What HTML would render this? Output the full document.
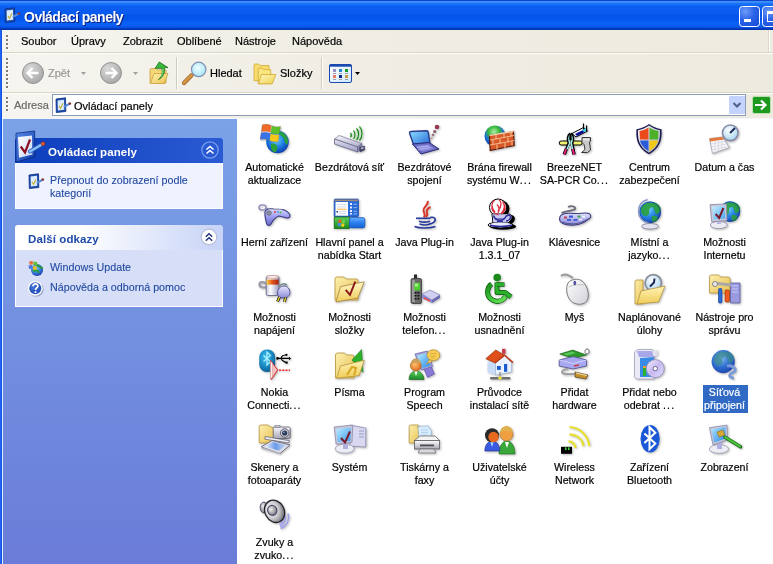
<!DOCTYPE html><html><head><meta charset="utf-8"><style>
*{margin:0;padding:0;box-sizing:border-box}
html,body{width:773px;height:564px;overflow:hidden;background:#fff;font-family:"Liberation Sans",sans-serif;font-size:11px}
.a{position:absolute;white-space:nowrap}
.g{position:absolute;width:2px;height:2px;background:#7e7c74;box-shadow:1px 1px 0 #fff}
.lb{position:absolute;width:75px;text-align:center;color:#000;line-height:13px;white-space:nowrap;transform:translateZ(0) scaleX(0.97);-webkit-text-stroke:0.2px #000}
.el{letter-spacing:1.2px}
.m{transform:translateZ(0);-webkit-text-stroke:0.2px #000}
svg{position:absolute;overflow:visible}
.lk{color:#2148a0;transform:translateZ(0) scaleX(0.975);transform-origin:0 0;-webkit-text-stroke:0.1px #2148a0}
</style></head><body>
<div class="a" style="left:0;top:0;width:773px;height:30px;background:linear-gradient(#0d45cc 0px,#0d45cc 1px,#3d8ef8 1px,#3a8af8 3px,#1a72fa 3px,#1570f8 5px,#0a5eef 6px,#0a5cf0 13px,#0555ea 15px,#0555ea 20px,#0a5ff4 22px,#0a5ff4 25px,#0556e6 27px,#0846d8 28px,#0036b0 29px,#0034a8 30px)"></div>
<svg style="left:4px;top:7px" width="16" height="16" viewBox="0 0 16 16"><path d="M1 2L10.5 .8 10.8 14.5 1.3 15.5z" fill="#2050b0" stroke="#0a2a80" stroke-width="0.8"/><path d="M2.6 3.6L9 2.8 9.2 12.8 2.9 13.6z" fill="#dcecff"/><path d="M4 9l1.5 2.2 2.5-5" stroke="#c8b040" stroke-width="1.2" fill="none"/><path d="M9.5 9.5L14.5 6.8" stroke="#5a8ad8" stroke-width="2" stroke-linecap="round"/><circle cx="14.8" cy="6.6" r="1.3" fill="#8a3a3a"/></svg>
<div class="a" style="left:24px;top:9px;color:#fff;font-weight:bold;font-size:14px;letter-spacing:-0.5px;text-shadow:1px 1px 0 #0a1f80;transform:translateZ(0)">Ovládací panely</div>
<svg style="left:739px;top:6px" width="21" height="21" viewBox="0 0 21 21"><defs><radialGradient id="mb" cx="0.3" cy="0.25" r="0.9"><stop offset="0" stop-color="#6d9cf8"/><stop offset="0.5" stop-color="#2a62e8"/><stop offset="1" stop-color="#1a4ed8"/></radialGradient></defs><rect x="0.5" y="0.5" width="20" height="20" rx="3" fill="url(#mb)" stroke="#fff"/><rect x="5" y="13" width="7" height="3" fill="#fff"/></svg>
<svg style="left:762px;top:6px" width="21" height="21" viewBox="0 0 21 21"><rect x="0.5" y="0.5" width="20" height="20" rx="3" fill="url(#mb)" stroke="#fff"/><rect x="5.5" y="6" width="10" height="9.5" fill="none" stroke="#fff" stroke-width="1"/><rect x="5" y="5" width="11" height="3" fill="#fff"/></svg>
<div class="a" style="left:2px;top:30px;width:771px;height:88px;background:linear-gradient(90deg,#f6f5f0 0,#f0eee5 35%,#edebdf 100%)"></div>
<div class="a" style="left:2px;top:52px;width:771px;height:1px;background:#d8d4c4"></div>
<div class="a" style="left:2px;top:53px;width:771px;height:1px;background:#fff"></div>
<div class="a" style="left:2px;top:92px;width:771px;height:1px;background:#d8d4c4"></div>
<div class="a" style="left:2px;top:93px;width:771px;height:1px;background:#fff"></div>
<div class="a" style="left:2px;top:118px;width:771px;height:1px;background:#f4f6fb"></div>
<div class="a" style="left:769px;top:30px;width:1px;height:22px;background:#fff"></div>
<div class="a" style="left:768px;top:30px;width:1px;height:22px;background:#dcd8c8"></div>
<div class="g" style="left:6px;top:35px"></div>
<div class="g" style="left:6px;top:39px"></div>
<div class="g" style="left:6px;top:43px"></div>
<div class="g" style="left:6px;top:47px"></div>
<div class="g" style="left:6px;top:58px"></div>
<div class="g" style="left:6px;top:62px"></div>
<div class="g" style="left:6px;top:66px"></div>
<div class="g" style="left:6px;top:70px"></div>
<div class="g" style="left:6px;top:74px"></div>
<div class="g" style="left:6px;top:78px"></div>
<div class="g" style="left:6px;top:82px"></div>
<div class="g" style="left:6px;top:86px"></div>
<div class="g" style="left:6px;top:97px"></div>
<div class="g" style="left:6px;top:101px"></div>
<div class="g" style="left:6px;top:105px"></div>
<div class="g" style="left:6px;top:109px"></div>
<div class="a m" style="left:21px;top:35px">Soubor</div>
<div class="a m" style="left:71px;top:35px">Úpravy</div>
<div class="a m" style="left:123px;top:35px">Zobrazit</div>
<div class="a m" style="left:177px;top:35px">Oblíbené</div>
<div class="a m" style="left:235px;top:35px">Nástroje</div>
<div class="a m" style="left:292px;top:35px">Nápověda</div>
<svg style="left:22px;top:62px" width="22" height="22" viewBox="0 0 22 22"><defs><radialGradient id="gb" cx="0.35" cy="0.3" r="0.8"><stop offset="0" stop-color="#dadada"/><stop offset="1" stop-color="#a4a4a4"/></radialGradient></defs><circle cx="11" cy="11" r="10.5" fill="url(#gb)" stroke="#929292"/><path d="M16.5 11H6M10.5 6l-5 5 5 5" stroke="#fff" stroke-width="2.4" fill="none" stroke-linejoin="miter"/></svg>
<div class="a m" style="left:48px;top:67px;color:#979797;-webkit-text-stroke:0.2px #979797">Zpět</div>
<svg style="left:81px;top:72px" width="5" height="3" viewBox="0 0 5 3"><path d="M0 0h5l-2.5 3z" fill="#a0a0a0"/></svg>
<svg style="left:100px;top:62px" width="22" height="22" viewBox="0 0 22 22"><circle cx="11" cy="11" r="10.5" fill="url(#gb)" stroke="#929292"/><path d="M5.5 11H16M11.5 6l5 5-5 5" stroke="#fff" stroke-width="2.4" fill="none"/></svg>
<svg style="left:133px;top:72px" width="5" height="3" viewBox="0 0 5 3"><path d="M0 0h5l-2.5 3z" fill="#a0a0a0"/></svg>
<svg style="left:148px;top:60px" width="24" height="24" viewBox="0 0 24 24"><defs><linearGradient id="upf" x1="0" y1="0" x2="1" y2="1"><stop offset="0" stop-color="#fff4b0"/><stop offset="1" stop-color="#e8c050"/></linearGradient></defs><path d="M2 10q0-1.5 1.5-1.5h5l1.5 1.5h8v13H2z" fill="#f4d878" stroke="#c8a040" stroke-width="0.8"/><path d="M2.5 23.5l3.5-10h14l-3.5 10z" fill="url(#upf)" stroke="#c8a040" stroke-width="0.8"/><path d="M10.5 19.5c3-2.5 4.5-6 3.5-11.2H7.2L11.3 2l8.6 5.6h-3.4c.5 6-2 10-6 11.9z" fill="#3cb83c" stroke="#1a6a1a" stroke-width="0.8"/><path d="M12.5 17c1.8-2 2.6-4.5 2.3-8" stroke="#8ae88a" stroke-width="1" fill="none"/></svg>
<div class="a" style="left:176px;top:57px;width:1px;height:32px;background:#d0ccba"></div>
<div class="a" style="left:177px;top:57px;width:1px;height:32px;background:#fff"></div>
<svg style="left:181px;top:60px" width="26" height="26" viewBox="0 0 26 26"><defs><radialGradient id="lens" cx="0.45" cy="0.4" r="0.6"><stop offset="0" stop-color="#f0ffff"/><stop offset="1" stop-color="#a8e4f8"/></radialGradient><linearGradient id="hdl" x1="0" y1="0" x2="1" y2="1"><stop offset="0" stop-color="#f8c060"/><stop offset="1" stop-color="#b86a20"/></linearGradient></defs><path d="M3 23l7.6-7.8" stroke="#8a5a2a" stroke-width="4.2" stroke-linecap="round"/><path d="M3 23l7.6-7.8" stroke="url(#hdl)" stroke-width="3" stroke-linecap="round"/><circle cx="17.7" cy="9.4" r="7.2" fill="url(#lens)" stroke="#8090b0" stroke-width="1.2"/></svg>
<div class="a m" style="left:210px;top:67px">Hledat</div>
<svg style="left:252px;top:62px" width="24" height="22" viewBox="0 0 24 22"><defs><linearGradient id="fld" x1="0" y1="0" x2="1" y2="1"><stop offset="0" stop-color="#fff8c0"/><stop offset="1" stop-color="#f0d050"/></linearGradient></defs><path d="M2 3q0-1 1-1h3.5l1.5 1.5h9V18.7H2z" fill="#f8dc70" stroke="#d0a830" stroke-width="0.8"/><path d="M6.2 7.2q0-1 1-1h3l1.5 1.5h7v14H6.2z" fill="#fae680" stroke="#d0a830" stroke-width="0.8"/><path d="M6.5 21.8l3-9.3h14.3l-3.5 9.3z" fill="url(#fld)" stroke="#d0a830" stroke-width="0.8"/></svg>
<div class="a m" style="left:280px;top:67px">Složky</div>
<div class="a" style="left:321px;top:57px;width:1px;height:32px;background:#d0ccba"></div>
<div class="a" style="left:322px;top:57px;width:1px;height:32px;background:#fff"></div>
<svg style="left:327px;top:62px" width="25" height="22" viewBox="0 0 25 22"><defs><linearGradient id="vw" x1="0" y1="0" x2="1" y2="1"><stop offset="0" stop-color="#ffffff"/><stop offset="1" stop-color="#cfe6ff"/></linearGradient></defs><rect x="2.5" y="2.5" width="22" height="18" rx="1.5" fill="url(#vw)" stroke="#1a4ab0" stroke-width="1"/><rect x="2.5" y="2.5" width="22" height="2.2" fill="#1a4ab0"/><rect x="6" y="7" width="3" height="3" fill="#9a90c0"/><rect x="6" y="11" width="3" height="1" fill="#a0a0a8"/><rect x="12" y="7" width="3" height="3" fill="#2a8ac8"/><rect x="12" y="11" width="3" height="1" fill="#a0a0a8"/><rect x="18" y="7" width="3" height="3" fill="#1a9a2a"/><rect x="18" y="11" width="3" height="1" fill="#a0a0a8"/><rect x="6" y="13" width="3" height="3" fill="#e8806a"/><rect x="6" y="17" width="3" height="1" fill="#a0a0a8"/><rect x="12" y="13" width="3" height="3" fill="#0a2a90"/><rect x="12" y="17" width="3" height="1" fill="#a0a0a8"/><rect x="18" y="13" width="3" height="3" fill="#c8a040"/><rect x="18" y="17" width="3" height="1" fill="#a0a0a8"/></svg>
<svg style="left:355px;top:72px" width="5" height="3" viewBox="0 0 5 3"><path d="M0 0h5l-2.5 3z" fill="#000"/></svg>
<div class="a m" style="left:14px;top:99px;color:#6a6a6a;-webkit-text-stroke:0.2px #6a6a6a">Adresa</div>
<div class="a" style="left:52px;top:94px;width:694px;height:22px;background:#fff;border:1px solid #8a9cb6"></div>
<svg style="left:55px;top:97px" width="16" height="16" viewBox="0 0 16 16"><path d="M1 2L10.5 .8 10.8 14.5 1.3 15.5z" fill="#2050b0" stroke="#0a2a80" stroke-width="0.8"/><path d="M2.6 3.6L9 2.8 9.2 12.8 2.9 13.6z" fill="#dcecff"/><path d="M4 9l1.5 2.2 2.5-5" stroke="#c8b040" stroke-width="1.2" fill="none"/><path d="M9.5 9.5L14.5 6.8" stroke="#5a8ad8" stroke-width="2" stroke-linecap="round"/><circle cx="14.8" cy="6.6" r="1.3" fill="#8a3a3a"/></svg>
<div class="a m" style="left:74px;top:100px">Ovládací panely</div>
<svg style="left:729px;top:96px" width="16" height="18" viewBox="0 0 16 18"><rect x="0" y="0" width="16" height="18" rx="1" fill="#c3d3fd"/><path d="M4.5 7l3.5 3.5 3.5-3.5" stroke="#4d6185" stroke-width="2" fill="none"/></svg>
<svg style="left:752px;top:96px" width="19" height="18" viewBox="0 0 19 18"><rect x="0.5" y="0.5" width="18" height="17" rx="2" fill="#1d9a1d" stroke="#b8e0b0"/><path d="M3 9h10M9 4.5l4.5 4.5-4.5 4.5" stroke="#fff" stroke-width="2.2" fill="none"/></svg>
<div class="a" style="left:0;top:30px;width:1px;height:534px;background:#2264f4"></div>
<div class="a" style="left:1px;top:30px;width:1px;height:534px;background:#1452e6"></div>
<div class="a" style="left:2px;top:119px;width:1px;height:445px;background:#e0f2ff"></div>
<div class="a" style="left:3px;top:119px;width:234px;height:445px;background:linear-gradient(#7ba2e7,#6a7cd8)"></div>
<div class="a" style="left:15px;top:138px;width:208px;height:25px;border-radius:3px 3px 0 0;background:linear-gradient(90deg,#0c3dbb 0%,#1f4fc9 60%,#2a5bd3 100%)"></div>
<div class="a" style="left:15px;top:163px;width:208px;height:46px;background:#eff3ff;border:1px solid #fff;border-top:0"></div>
<svg style="left:14px;top:130px" width="32" height="32" viewBox="0 0 32 32"><defs><linearGradient id="cpf" x1="0" y1="0" x2="1" y2="1"><stop offset="0" stop-color="#5a8ae8"/><stop offset="1" stop-color="#0c3aa8"/></linearGradient><linearGradient id="cpi" x1="0" y1="0" x2="1" y2="1"><stop offset="0" stop-color="#ffffff"/><stop offset="1" stop-color="#c8d8f8"/></linearGradient></defs><path d="M2 3.3L20.6 1 21 26.7 2 32z" fill="url(#cpf)" stroke="#0a2a80" stroke-width="0.8"/><path d="M4 7L18 5.4 18.4 24.5 5 27.7z" fill="url(#cpi)"/><path d="M6.7 16.5l4.3 6 5-13" stroke="#8a1020" stroke-width="2.2" fill="none"/><path d="M16 21.5L28.5 14" stroke="#2a5ab8" stroke-width="4" stroke-linecap="round"/><path d="M16 21.5L28.5 14" stroke="#8ac0f8" stroke-width="2.4" stroke-linecap="round"/><circle cx="29" cy="13.7" r="2" fill="#e05a3a" stroke="#7a1a1a" stroke-width="0.6"/></svg>
<div class="a" style="left:48px;top:146px;color:#fff;font-weight:bold;font-size:11.5px;letter-spacing:0.1px;transform:translateZ(0)">Ovládací panely</div>
<svg style="left:201px;top:141px" width="18" height="18" viewBox="0 0 18 18"><circle cx="9" cy="9" r="8.2" fill="#2a5ad2" stroke="#7aa0ee" stroke-width="1.2"/><path d="M5.5 8.5l3.5-3 3.5 3M5.5 12.5l3.5-3 3.5 3" stroke="#fff" stroke-width="1.6" fill="none"/></svg>
<svg style="left:28px;top:173px" width="16" height="16" viewBox="0 0 16 16"><path d="M1 2L10.5 .8 10.8 14.5 1.3 15.5z" fill="#2050b0" stroke="#0a2a80" stroke-width="0.8"/><path d="M2.6 3.6L9 2.8 9.2 12.8 2.9 13.6z" fill="#dcecff"/><path d="M4 9l1.5 2.2 2.5-5" stroke="#c8b040" stroke-width="1.2" fill="none"/><path d="M9.5 9.5L14.5 6.8" stroke="#5a8ad8" stroke-width="2" stroke-linecap="round"/><circle cx="14.8" cy="6.6" r="1.3" fill="#8a3a3a"/></svg>
<div class="a lk" style="left:50px;top:174px;line-height:13px">Přepnout do zobrazení podle<br>kategorií</div>
<div class="a" style="left:15px;top:225px;width:208px;height:25px;border-radius:3px 3px 0 0;background:linear-gradient(90deg,#fff 0%,#fff 30%,#c6d3f7 100%)"></div>
<div class="a" style="left:15px;top:250px;width:208px;height:57px;background:#d6dff7;border:1px solid #fff;border-top:0"></div>
<div class="a" style="left:28px;top:233px;color:#1e4aa8;font-weight:bold;font-size:11.5px;letter-spacing:0.1px;transform:translateZ(0)">Další odkazy</div>
<svg style="left:200px;top:228px" width="18" height="18" viewBox="0 0 18 18"><circle cx="9" cy="9" r="7.8" fill="#fff" stroke="#b8bedc" stroke-width="1.2"/><path d="M5.8 8.8l3.2-3 3.2 3M5.8 12.8l3.2-3 3.2 3" stroke="#1c3078" stroke-width="1.4" fill="none"/></svg>
<svg style="left:27px;top:259px" width="17" height="17" viewBox="0 0 17 17"><defs><radialGradient id="wus" cx="0.4" cy="0.35" r="0.7"><stop offset="0" stop-color="#6ad0ff"/><stop offset="1" stop-color="#1238b0"/></radialGradient></defs><circle cx="10" cy="11" r="6" fill="url(#wus)"/><path d="M6 12c2-1 5-1 6 2M10 6c2 1 4 3 6 3" stroke="#2a9a3a" stroke-width="2" fill="none"/><path d="M2 2.5l3.5-.8 .8 3.6-3.5 .8z" fill="#f07040"/><path d="M6.5 2.5l3.8 .6-.4 3.6-3.6-.6z" fill="#60c030"/><path d="M1.5 6.5l3.6-.6 .6 3.6-3.6 .6z" fill="#4a7ae0"/><path d="M6.3 7l3.6 .5-.4 3.6-3.6-.5z" fill="#f0c020"/></svg>
<div class="a lk" style="left:50px;top:261px">Windows Update</div>
<svg style="left:27px;top:280px" width="17" height="17" viewBox="0 0 17 17"><circle cx="9.2" cy="9.2" r="7.4" fill="#1a2a60" opacity=".35"/><circle cx="8.3" cy="8.3" r="7.4" fill="#fff"/><circle cx="8.3" cy="8.3" r="6" fill="#2a58c0"/><circle cx="7" cy="6.5" r="3.5" fill="#5a88e0" opacity=".5"/><path d="M5.9 6.3c0-1.5 1.1-2.5 2.5-2.5s2.5 1 2.5 2.3c0 1.8-2.3 1.9-2.3 3.8" stroke="#fff" stroke-width="1.7" fill="none"/><rect x="7.6" y="11.2" width="1.8" height="1.8" fill="#fff"/></svg>
<div class="a lk" style="left:50px;top:281px">Nápověda a odborná pomoc</div>
<svg style="left:258px;top:122px;filter:drop-shadow(1px 1px 1px rgba(0,0,0,.28))" width="32" height="32" viewBox="0 0 32 32"><defs><radialGradient id="g00b" cx="0.45" cy="0.4" r="0.7"><stop offset="0" stop-color="#70d8ff"/><stop offset="0.5" stop-color="#1a78e0"/><stop offset="1" stop-color="#0a2a98"/></radialGradient></defs><circle cx="19.5" cy="20" r="11.3" fill="url(#g00b)"/><path d="M22 9.5c3 .5 6 3 7.5 6.5.8 2.5.5 5-.5 7-1.5-1-2.5-3-2.5-5s-2-3-4-4.5z M13 22c2-1 5 0 6 2s0 5-2 6.5c-2-.5-3.5-2-4-4.5z" fill="#2aa03a"/><path d="M4.3 2.8c3-1 6-.5 9 .7l-1 6.8c-3-1.2-6-1.5-9-.5z" fill="#f06a28"/><path d="M13.8 3.8c3 1.2 6 1.5 8.7.8l-1 7c-2.7.8-5.7.5-8.7-.8z" fill="#5cc028"/><path d="M3 10.8c3-1 6-.7 9 .5l-1 6.8c-3-1.2-6-1.5-9-.5z" fill="#3a72e8"/><path d="M12.6 11.6c3 1.2 6 1.5 8.7.8l-1 7c-2.7.8-5.7.5-8.7-.8z" fill="#f8c818"/><path d="M4.3 2.8c3-1 6-.5 9 .7 3 1.2 6 1.5 9.2.8l-2.2 15.2c-2.7.8-5.7.5-8.7-.8-3-1.2-6-1.5-9-.5z" fill="none" stroke="#5a4a3a" stroke-width="0.5" opacity=".5"/></svg>
<div class="lb" style="left:237.0px;top:161px">Automatické<br>aktualizace</div>
<svg style="left:333px;top:122px;filter:drop-shadow(1px 1px 1px rgba(0,0,0,.28))" width="32" height="32" viewBox="0 0 32 32"><defs><linearGradient id="u1" x1="0" y1="0" x2="0" y2="1"><stop offset="0" stop-color="#fafafe"/><stop offset="1" stop-color="#a8a8c8"/></linearGradient><linearGradient id="u1b" x1="0" y1="0" x2="0" y2="1"><stop offset="0" stop-color="#e4e4f4"/><stop offset="1" stop-color="#9a9ac4"/></linearGradient></defs><path d="M1.5 17l4.5-3.5 23 8-4.5 3.5z" fill="url(#u1)" stroke="#7a7a98" stroke-width="0.7"/><path d="M1.5 17l23 8v5l-23-8z" fill="url(#u1b)" stroke="#5a5a80" stroke-width="0.7"/><path d="M24.5 25l4.5-3.5v5l-4.5 3.5z" fill="#8a8ab0" stroke="#5a5a80" stroke-width="0.5"/><path d="M26.5 25.5l5-1.5v4l-4.5 2z" fill="#4a4a70" stroke="#2a2a50" stroke-width="0.5"/><path d="M28 25.8l2.5-.8v1.5l-2.5.8z" fill="#c8c8e0"/><g fill="none" stroke="#a8f0a8" stroke-width="2.4" opacity=".6"><path d="M17.5 11c1 1.2 1 3 0 4.2"/><path d="M20.5 8.5c2 2.2 2 6.3 0 8.5"/><path d="M23.5 6.5c2.8 3 2.8 8.5 0 11.5"/><path d="M26.5 4.5c3.3 4 3.3 10.5 0 14"/></g><g fill="none" stroke="#1a7a1a" stroke-width="1.1"><path d="M17.5 11c1 1.2 1 3 0 4.2"/><path d="M20.5 8.5c2 2.2 2 6.3 0 8.5"/><path d="M23.5 6.5c2.8 3 2.8 8.5 0 11.5"/><path d="M26.5 4.5c3.3 4 3.3 10.5 0 14"/></g></svg>
<div class="lb" style="left:312.0px;top:161px">Bezdrátová síť</div>
<svg style="left:408px;top:122px;filter:drop-shadow(1px 1px 1px rgba(0,0,0,.28))" width="32" height="32" viewBox="0 0 32 32"><defs><linearGradient id="l1" x1="0" y1="0" x2="1" y2="1"><stop offset="0" stop-color="#8ae0ff"/><stop offset="1" stop-color="#2a6ad8"/></linearGradient></defs><path d="M1.5 11q0-1.5 1.5-1.5l15.5-.8q1.5 0 1.7 1.5l1.8 10.8-16.5 1.5z" fill="url(#l1)" stroke="#2a3a8a" stroke-width="1.4"/><path d="M4.5 22l16.5-1.5 10 6.5-18 5z" fill="#6a6ac0" stroke="#2a2a7a" stroke-width="1"/><path d="M8 24l12-1.5 6 4-12 3z" fill="#8e8ee0"/><path d="M9 25.5l12-1.5M10 27.5l12-1.8" stroke="#c8c8f8" stroke-width="0.6"/><circle cx="29" cy="5" r="2.3" fill="#9a3a50"/><circle cx="26.7" cy="9.5" r="1.6" fill="#8a5a6a"/><circle cx="25" cy="13" r="1.4" fill="#9a7a80"/><circle cx="23.6" cy="16.2" r="1.1" fill="#b8a0a0"/></svg>
<div class="lb" style="left:387.0px;top:161px">Bezdrátové<br>spojení</div>
<svg style="left:483px;top:122px;filter:drop-shadow(1px 1px 1px rgba(0,0,0,.28))" width="32" height="32" viewBox="0 0 32 32"><defs><radialGradient id="g03b" cx="0.45" cy="0.3" r="0.75"><stop offset="0" stop-color="#a8f0a8"/><stop offset="0.35" stop-color="#3ab83a"/><stop offset="0.6" stop-color="#1a70d8"/><stop offset="1" stop-color="#0a2a98"/></radialGradient></defs><circle cx="12" cy="14" r="10.5" fill="url(#g03b)"/><path d="M6.5 13.5l24-4 .7 14-24 5z" fill="#d8582a" stroke="#5a1a0a" stroke-width="1.2"/><g stroke="#f4b888" stroke-width="1.1" fill="none"><path d="M7 18l24-4.5M7 23l24-4.5"/><path d="M13 12.5v5M21 11v5M28 10v4.5M10 18v5M17 17v5M25 15.5v5M14 22.5v5M22 21v5M29 19.5v4"/></g><path d="M6.5 13.5l24-4" stroke="#f8d0a8" stroke-width="1.4"/></svg>
<div class="lb" style="left:462.0px;top:161px">Brána firewall<br>systému W<span class=el>...</span></div>
<svg style="left:558px;top:122px;filter:drop-shadow(1px 1px 1px rgba(0,0,0,.28))" width="32" height="32" viewBox="0 0 32 32"><path d="M14 11.5l11.5-6 4 3.5-11.5 6z" fill="#fff" stroke="#000" stroke-width="1"/><path d="M17 12l8-4 2 2-8 4z" fill="#0a0a9a"/><path d="M24 8l4-2 1.5 2-3.5 2z" fill="#38d8f0"/><path d="M25.5 1.5v6M28.6 3.5v5.5" stroke="#000" stroke-width="1.2"/><rect x="1.2" y="19" width="23" height="4" rx="2" fill="#f0f070" stroke="#000" stroke-width="1"/><path d="M24 15.5h8.5v3.5l-1 1 1 8-3 2.5h-6l3.5-3-1-5-2-2z" fill="#c8c8c8" stroke="#383838" stroke-width="1"/><path d="M25 16.5h6v2h-6z" fill="#e8e8e8"/><path d="M12.5 12c-2.5 1-3 5-1.5 9l-4.5 11M12.5 12c2.5 1 3 5 1.5 9l2 11" fill="none" stroke="#000" stroke-width="3"/><path d="M12.5 13c-2 1-2 5-.8 8l-4.5 10.5M12.5 13c2 1 2 5 .8 8l2 10.5" fill="none" stroke="#a8f4f4" stroke-width="1.4"/><path d="M12.5 12v6" stroke="#000" stroke-width="2.2"/><path d="M8.2 27l-2 5.5M14.8 27l1.2 5.5" stroke="#000" stroke-width="3.4"/><path d="M8.2 27l-2 5.5M14.8 27l1.2 5.5" stroke="#e8207a" stroke-width="2"/></svg>
<div class="lb" style="left:537.0px;top:161px">BreezeNET<br>SA-PCR Co<span class=el>...</span></div>
<svg style="left:633px;top:122px;filter:drop-shadow(1px 1px 1px rgba(0,0,0,.28))" width="32" height="32" viewBox="0 0 32 32"><defs><linearGradient id="sh" x1="0" y1="0" x2="1" y2="1"><stop offset="0" stop-color="#fff"/><stop offset="1" stop-color="#9aa0b8"/></linearGradient></defs><path d="M16 2c-3 2.5-8 4.5-12.5 5.2-.5 8-.2 18 12.5 25 12.7-7 13-17 12.5-25C24 6.5 19 4.5 16 2z" fill="#1a1a50"/><path d="M16 3.6c-3 2.3-7 4-11 4.7-.3 7.3.2 16.3 11 22.5 10.8-6.2 11.3-15.2 11-22.5-4-.7-8-2.4-11-4.7z" fill="url(#sh)"/><path d="M15.5 5.5c-2.5 1.8-5.5 3-9 3.6L7 17.5h8.5z" fill="#ec4a1a"/><path d="M16.5 5.5c2.5 1.8 5.5 3 9 3.6L25 17.5h-8.5z" fill="#4cb02a"/><path d="M7 18.5h8.5v10.5C10 25.5 7.5 22 7 18.5z" fill="#2a5ad8"/><path d="M25 18.5h-8.5v10.5C22 25.5 24.5 22 25 18.5z" fill="#f0c818"/></svg>
<div class="lb" style="left:612.0px;top:161px">Centrum<br>zabezpečení</div>
<svg style="left:708px;top:122px;filter:drop-shadow(1px 1px 1px rgba(0,0,0,.28))" width="32" height="32" viewBox="0 0 32 32"><defs><radialGradient id="ck" cx="0.4" cy="0.35" r="0.7"><stop offset="0" stop-color="#ffffff"/><stop offset="1" stop-color="#a8d8f0"/></radialGradient></defs><path d="M1.5 16.5l13-1.5 7 10.5-17 6z" fill="#f4f4f8" stroke="#a0a0b0" stroke-width="0.8"/><path d="M1.5 16.5l13-1.5 1.5 2.5-14 2z" fill="#e8783a"/><g stroke="#d0d0dc" stroke-width="0.6"><path d="M3 22l14-2.5M3.5 25l15-3M4 28l15.5-3.5M7 19v11M10.5 18.5v10.5M14 18v9.5"/></g><circle cx="22.3" cy="10.8" r="8.6" fill="#8a8aa8"/><circle cx="22.3" cy="10.8" r="7" fill="url(#ck)"/><path d="M22 11l5-5" stroke="#1a2a5a" stroke-width="2"/></svg>
<div class="lb" style="left:687.0px;top:161px">Datum a čas</div>
<svg style="left:258px;top:197px;filter:drop-shadow(1px 1px 1px rgba(0,0,0,.28))" width="32" height="32" viewBox="0 0 32 32"><defs><linearGradient id="gp" x1="0" y1="0" x2="0" y2="1"><stop offset="0" stop-color="#d8d8ff"/><stop offset="0.5" stop-color="#9a9af0"/><stop offset="1" stop-color="#6a6ac8"/></linearGradient></defs><ellipse cx="4.5" cy="10.5" rx="3.5" ry="2.6" fill="none" stroke="#8a8ab8" stroke-width="1.4"/><path d="M7.5 11.5c2 .5 4 1 6 1.5" stroke="#8a8ab8" stroke-width="1.4"/><path d="M7 15C8 12 12 11.5 16 12L24 12.5C28 13 32 16 32 19C32 21 29 21.5 27 20.5L21 19C18 20 15 23 13 27C12 29 9 29 8.5 26.5C7.5 22 6.5 18 7 15z" fill="url(#gp)" stroke="#3a3a80" stroke-width="1.1"/><circle cx="11" cy="16" r="2.4" fill="#8a8a9a" stroke="#5a5a70" stroke-width="0.5"/><circle cx="17" cy="15" r="1" fill="#e04040"/><circle cx="20" cy="14.8" r="1" fill="#40a0e0"/><circle cx="22.5" cy="15.5" r="1" fill="#40c040"/><path d="M10 13c4-1 10-1 14 0" stroke="#fff" stroke-width="0.8" opacity=".7"/></svg>
<div class="lb" style="left:237.0px;top:236px">Herní zařízení</div>
<svg style="left:333px;top:197px;filter:drop-shadow(1px 1px 1px rgba(0,0,0,.28))" width="32" height="32" viewBox="0 0 32 32"><defs><linearGradient id="tb" x1="0" y1="0" x2="0" y2="1"><stop offset="0" stop-color="#6ab0ff"/><stop offset="0.5" stop-color="#2a80f0"/><stop offset="1" stop-color="#1a60d0"/></linearGradient><linearGradient id="sb" x1="0" y1="0" x2="0" y2="1"><stop offset="0" stop-color="#5ad05a"/><stop offset="1" stop-color="#1a8a1a"/></linearGradient></defs><rect x="1.2" y="2.1" width="24.2" height="17.6" rx="1" fill="#2a6ad8" stroke="#1a4aa8" stroke-width="0.8"/><rect x="1.6" y="2.5" width="23.4" height="1.6" fill="#f0a040" opacity=".6"/><rect x="2.5" y="5" width="12.5" height="13.7" fill="#fff"/><g fill="#c8d0e0"><rect x="4" y="7" width="9" height="0.8"/><rect x="4" y="9.5" width="9" height="0.8"/><rect x="6" y="14" width="7" height="0.8"/><rect x="6" y="16" width="7" height="0.8"/></g><rect x="4" y="11.7" width="9.5" height="1" fill="#f0b040"/><rect x="3.5" y="14" width="1.5" height="1.5" fill="#1a2a6a"/><g fill="#e8f0ff"><rect x="17" y="6" width="2" height="2"/><rect x="17" y="9.5" width="2" height="2"/><rect x="17" y="13" width="2" height="2"/><rect x="17" y="16" width="2" height="1.5"/></g><g fill="#a8c8f8"><rect x="20.5" y="6.8" width="3.5" height="0.8"/><rect x="20.5" y="10.3" width="3.5" height="0.8"/><rect x="20.5" y="13.8" width="3.5" height="0.8"/><rect x="20.5" y="16.5" width="3.5" height="0.8"/></g><rect x="1.2" y="20" width="15.3" height="11.5" fill="url(#sb)" stroke="#1a6a1a" stroke-width="0.8"/><rect x="16.5" y="20.6" width="15.3" height="10.3" rx="2" fill="url(#tb)" stroke="#1a5ac0" stroke-width="0.8"/><path d="M5.5 22.5l3 .3-.4 3-3-.3z" fill="#f05a2a"/><path d="M9 23l3 .3-.4 3-3-.3z" fill="#6ad04a"/><path d="M5 26l3 .3-.4 3-3-.3z" fill="#4a8af0"/><path d="M8.5 26.5l3 .3-.4 3-3-.3z" fill="#f8d020"/></svg>
<div class="lb" style="left:312.0px;top:236px">Hlavní panel a<br>nabídka Start</div>
<svg style="left:408px;top:197px;filter:drop-shadow(1px 1px 1px rgba(0,0,0,.28))" width="32" height="32" viewBox="0 0 32 32"><g fill="none" stroke="#d8382a" stroke-width="2"><path d="M19.5 4c2 3.5-4.5 5.5-4 9.5.3 3 2.5 3.5.5 7"/><path d="M22.5 10c-3 1.5-4.5 3.5-3.5 6s-.5 3-1.5 3.8"/></g><g fill="none" stroke="#2a3a9a" stroke-width="1.6"><path d="M8 21.3h14.5"/><path d="M22 20.5c4-1 6.5 1 4.5 4-1 1.5-3 2.2-5.5 2.5"/><path d="M11 24.2c3 1 8 1 11 0"/><path d="M11.5 27c3 1 8 1 10.5 0"/><path d="M6.5 29.5c5 2 15 2 21 0"/></g></svg>
<div class="lb" style="left:387.0px;top:236px">Java Plug-in</div>
<svg style="left:483px;top:197px;filter:drop-shadow(1px 1px 1px rgba(0,0,0,.28))" width="32" height="32" viewBox="0 0 32 32"><g transform="translate(2.5,1.5)" fill="#000"><ellipse cx="15" cy="10.5" rx="9" ry="9"/><path d="M8.5 16.5h16.5c4 0 5.5 3 3.5 6.5l-3 3.5H9.5z"/><ellipse cx="17.5" cy="28" rx="13" ry="3.2"/></g><g fill="#fff" stroke="#000" stroke-width="1"><ellipse cx="15" cy="10.5" rx="8.5" ry="8.5"/><path d="M9 17h16c4 0 5 3 3 6l-3 3H10z"/><ellipse cx="17.5" cy="28" rx="12.5" ry="2.8"/></g><path d="M9.5 17.5h15c3 0 4 2.5 2.5 5l-2.5 3H10.5z" fill="#c8c8f0"/><ellipse cx="17.5" cy="28" rx="11.5" ry="2.2" fill="#e8e8ff"/><g fill="none" stroke="#e0283a" stroke-width="1.3"><path d="M12 3c-4.5 3-3.5 8.5 0 12M16 2.5c3.5 3 2 7.5-1 11.5M19.5 4.5c3 3 2.5 8-1.5 12.5M9 9c-1 4 2 7.5 6.5 9M14 7.5c2 2 3 5 1 8.5M21.5 8.5c1.5 3 0 6.5-3.5 8.5"/></g><g fill="none" stroke="#2a2a9a" stroke-width="1.5"><path d="M10.5 18.5c2 6 10 7 13 0"/><path d="M23.5 19c3-2 6 0 3 3.5-1 1-2 1.5-3.5 1.5"/><path d="M7 28c5 2 16 2 22 0"/><path d="M13 22h8M14 24.5h6" stroke-width="1"/></g></svg>
<div class="lb" style="left:462.0px;top:236px">Java Plug-in<br>1.3.1_07</div>
<svg style="left:558px;top:197px;filter:drop-shadow(1px 1px 1px rgba(0,0,0,.28))" width="32" height="32" viewBox="0 0 32 32"><defs><linearGradient id="kb" x1="0" y1="0" x2="0" y2="1"><stop offset="0" stop-color="#e0e0ff"/><stop offset="1" stop-color="#8a8ad8"/></linearGradient></defs><path d="M10 10c4-2 8 0 7 2-1 2-9 1.5-13.5 4" fill="none" stroke="#6a6a7a" stroke-width="1.8"/><path d="M2 19.5c2-3.5 8-3.5 14-3s12-1.5 15 0c2 1 2.5 3.5.5 5-4 2.5-6 6-15 6.5-8 .5-17-1-14.5-8.5z" fill="url(#kb)" stroke="#3a3a7a" stroke-width="1.1"/><path d="M4 25c4 2 10 2 15 1.5 5-.5 8-3 11-4.5" fill="none" stroke="#5a5a9a" stroke-width="1.2"/><g fill="#c04050"><rect x="6" y="19.5" width="3" height="2"/></g><g fill="#3a5ad0"><rect x="11" y="18.5" width="4" height="2.2"/><rect x="9" y="22" width="4" height="1.8"/><rect x="15.5" y="22" width="4" height="1.8"/></g><g fill="#3aa050"><rect x="19.5" y="18.5" width="3" height="2"/></g><g fill="#fff" opacity=".8"><rect x="24" y="19" width="3" height="1.6"/><rect x="21" y="22" width="3" height="1.4"/></g></svg>
<div class="lb" style="left:537.0px;top:236px">Klávesnice</div>
<svg style="left:633px;top:197px;filter:drop-shadow(1px 1px 1px rgba(0,0,0,.28))" width="32" height="32" viewBox="0 0 32 32"><defs><radialGradient id="g15" cx="0.4" cy="0.35" r="0.75"><stop offset="0" stop-color="#7fd8ff"/><stop offset="0.45" stop-color="#2a8ae8"/><stop offset="1" stop-color="#1238a8"/></radialGradient></defs><circle cx="17.1" cy="15.2" r="10.8" fill="url(#g15)"/><path transform="translate(17.1,15.2) scale(0.9818181818181819)" d="M-8 -6c3-4 8-5 11-3 2 2-1 4-3 5-2 2 0 5-2 7-3 2-6 0-7-3-1-2 0-4 1-6z M3 -10c4 0 7 3 8 6 0 3-2 5-4 6-2 0-2-3-3-5-1-2-3-3-2-5z M2 4c3-1 6 0 6 2 0 3-3 5-5 4-1-1-2-4-1-6z" fill="#2aa03a" opacity="0.9"/><circle cx="17.1" cy="15.2" r="10.3" fill="none" stroke="#0d2f90" stroke-width="1" opacity="0.6"/><path d="M14.6 2.5c-6 1.5-9 6-9 12s4 10.5 10 11.5" fill="none" stroke="#8a9ac8" stroke-width="1.5"/><path d="M16 26v2" stroke="#a0a0c0" stroke-width="2"/><ellipse cx="17" cy="29.3" rx="8.5" ry="2.8" fill="#e4e4f0" stroke="#9090a8" stroke-width="1"/></svg>
<div class="lb" style="left:612.0px;top:236px">Místní a<br>jazyko<span class=el>...</span></div>
<svg style="left:708px;top:197px;filter:drop-shadow(1px 1px 1px rgba(0,0,0,.28))" width="32" height="32" viewBox="0 0 32 32"><defs><radialGradient id="g16" cx="0.4" cy="0.35" r="0.75"><stop offset="0" stop-color="#7fd8ff"/><stop offset="0.45" stop-color="#2a8ae8"/><stop offset="1" stop-color="#1238a8"/></radialGradient></defs><circle cx="21.9" cy="14.6" r="10.3" fill="url(#g16)"/><path transform="translate(21.9,14.6) scale(0.9363636363636364)" d="M-8 -6c3-4 8-5 11-3 2 2-1 4-3 5-2 2 0 5-2 7-3 2-6 0-7-3-1-2 0-4 1-6z M3 -10c4 0 7 3 8 6 0 3-2 5-4 6-2 0-2-3-3-5-1-2-3-3-2-5z M2 4c3-1 6 0 6 2 0 3-3 5-5 4-1-1-2-4-1-6z" fill="#2aa03a" opacity="0.9"/><circle cx="21.9" cy="14.6" r="9.8" fill="none" stroke="#0d2f90" stroke-width="1" opacity="0.6"/><ellipse cx="10.8" cy="28" rx="8.5" ry="3.6" fill="#ececf4" stroke="#9a9ab0" stroke-width="1"/><path d="M9 21h4v6H9z" fill="#b8b8e0"/><defs><linearGradient id="mi" x1="0" y1="0" x2="1" y2="1"><stop offset="0" stop-color="#c8f0ff"/><stop offset="1" stop-color="#4aa8ee"/></linearGradient></defs><path d="M2.1 7.6l16.3-.6.6 16.5-15.3 1.3z" fill="#c8c8d8" stroke="#8a8aa8" stroke-width="0.8"/><path d="M4 9.5l12.8-.5.5 12.5-11.8 1z" fill="url(#mi)"/><path d="M7.6 17l3.6 4 4.2-10" stroke="#7a1a2a" stroke-width="2" fill="none"/></svg>
<div class="lb" style="left:687.0px;top:236px">Možnosti<br>Internetu</div>
<svg style="left:258px;top:272px;filter:drop-shadow(1px 1px 1px rgba(0,0,0,.28))" width="32" height="32" viewBox="0 0 32 32"><defs><linearGradient id="bt" x1="0" y1="0" x2="1" y2="0"><stop offset="0" stop-color="#c8c8e0"/><stop offset="0.35" stop-color="#ffffff"/><stop offset="1" stop-color="#9a9ac0"/></linearGradient><linearGradient id="bnd" x1="0" y1="0" x2="1" y2="0"><stop offset="0" stop-color="#f8d040"/><stop offset="0.45" stop-color="#e85a20"/><stop offset="1" stop-color="#a82010"/></linearGradient><linearGradient id="plg" x1="0" y1="0" x2="0" y2="1"><stop offset="0" stop-color="#e8e8ff"/><stop offset="1" stop-color="#8a8ad8"/></linearGradient></defs><path d="M8.5 12c-3-2.5-7-2.5-7 .5s4 3.5 7 2.5" fill="none" stroke="#9a9aa8" stroke-width="2.2"/><rect x="8.2" y="4.2" width="12.8" height="19.3" rx="1.5" fill="url(#bt)" stroke="#6a6a88" stroke-width="0.9"/><ellipse cx="14.6" cy="5" rx="6.2" ry="1.5" fill="#f4e8e8" stroke="#c89080" stroke-width="0.6"/><rect x="8.6" y="7.6" width="12" height="5" fill="url(#bnd)"/><path d="M21 15c1-3 6-4.5 8-1.5" fill="none" stroke="#7a9090" stroke-width="1.6"/><path d="M19.5 21c0-4 3-7 6.5-7s6 3 6 6.5-3 5.5-6 5.5h-2.5c-2.5 0-4-2-4-5z" fill="url(#plg)" stroke="#4a4a90" stroke-width="0.9"/><path d="M21.5 25l-2 4.5M27.5 25.5l-1 4.5" stroke="#000" stroke-width="2.8"/><path d="M21.5 25l-2 4.5M27.5 25.5l-1 4.5" stroke="#f0d838" stroke-width="1.4"/></svg>
<div class="lb" style="left:237.0px;top:311px">Možnosti<br>napájení</div>
<svg style="left:333px;top:272px;filter:drop-shadow(1px 1px 1px rgba(0,0,0,.28))" width="32" height="32" viewBox="0 0 32 32"><defs><linearGradient id="f21" x1="0" y1="0" x2="1" y2="1"><stop offset="0" stop-color="#fcf0b0"/><stop offset="1" stop-color="#e8c050"/></linearGradient></defs><path d="M2 7q0-2 2-2h7l2 2h10q2 0 2 2V28H2z" fill="url(#f21)" stroke="#b8943a" stroke-width="0.8"/><defs><linearGradient id="f21b" x1="0" y1="0" x2="0" y2="1"><stop offset="0" stop-color="#fff8c8"/><stop offset="1" stop-color="#f0cc58"/></linearGradient></defs><path d="M7.6 14.6l23.6-4.8-6.4 16.2-22 4z" fill="url(#f21b)" stroke="#a8843a" stroke-width="0.8"/><path d="M12.7 17.8l4.3 5.1 5.3-13.4" stroke="#8a1a1a" stroke-width="2" fill="none"/></svg>
<div class="lb" style="left:312.0px;top:311px">Možnosti<br>složky</div>
<svg style="left:408px;top:272px;filter:drop-shadow(1px 1px 1px rgba(0,0,0,.28))" width="32" height="32" viewBox="0 0 32 32"><path d="M6 2.5h3v5H6z" fill="#2a2a2a"/><rect x="3" y="6.5" width="10.5" height="25" rx="1.5" fill="#6a6a6a" stroke="#3a3a3a" stroke-width="0.8"/><rect x="4" y="8" width="3" height="22" fill="#9a9a9a"/><rect x="6.3" y="10.8" width="5.7" height="7.6" fill="#4ad030"/><rect x="7" y="11.5" width="3" height="3" fill="#a8f088"/><g fill="#101010"><rect x="6.5" y="20" width="2" height="1.5"/><rect x="9.5" y="20" width="2" height="1.5"/><rect x="6.5" y="23" width="2" height="1.5"/><rect x="9.5" y="23" width="2" height="1.5"/><rect x="6.5" y="26" width="2" height="1.5"/><rect x="9.5" y="26" width="2" height="1.5"/></g><path d="M14 22l8-4 10 5-8 5z" fill="#d0d0f0" stroke="#7a7ab0" stroke-width="0.6"/><path d="M14 22l10 6v3l-10-5z" fill="#8a8ad8"/><path d="M24 28l8-5v3l-8 5z" fill="#6a6ab0"/><path d="M16 26l6 3" stroke="#e84a4a" stroke-width="1.5"/></svg>
<div class="lb" style="left:387.0px;top:311px">Možnosti<br>telefon<span class=el>...</span></div>
<svg style="left:483px;top:272px;filter:drop-shadow(1px 1px 1px rgba(0,0,0,.28))" width="32" height="32" viewBox="0 0 32 32"><defs><linearGradient id="wc" x1="0" y1="0" x2="1" y2="1"><stop offset="0" stop-color="#1a8a1a"/><stop offset="0.5" stop-color="#3ac83a"/><stop offset="1" stop-color="#6ae05a"/></linearGradient></defs><circle cx="14.2" cy="5.6" r="3.8" fill="#1a8a1a"/><path d="M8.5 12A9.6 9.6 0 1 0 22.5 24.5" fill="none" stroke="#0a5a0a" stroke-width="5"/><path d="M8.5 12A9.6 9.6 0 1 0 22.5 24.5" fill="none" stroke="url(#wc)" stroke-width="3.6"/><path d="M14 10.5v10h8l6 4.5" fill="none" stroke="#0a5a0a" stroke-width="5" stroke-linejoin="round"/><path d="M14 10.5v10h8l6 4.5" fill="none" stroke="#2ab02a" stroke-width="3.6" stroke-linejoin="round"/><path d="M14 12.5h7.5" stroke="#0a5a0a" stroke-width="4.4"/><path d="M14 12.5h7" stroke="#2ab02a" stroke-width="3"/></svg>
<div class="lb" style="left:462.0px;top:311px">Možnosti<br>usnadnění</div>
<svg style="left:558px;top:272px;filter:drop-shadow(1px 1px 1px rgba(0,0,0,.28))" width="32" height="32" viewBox="0 0 32 32"><defs><linearGradient id="ms" x1="0" y1="0" x2="1" y2="1"><stop offset="0" stop-color="#ffffff"/><stop offset="1" stop-color="#d0d0d8"/></linearGradient></defs><path d="M3 4c3-3 8-1 12 2" fill="none" stroke="#9a9a9a" stroke-width="2"/><path d="M10 11c3-4 10-5 14-2 5 4 7 12 6 17-1 5-6 7-11 6-6-1-9-6-10-11-.5-4-.5-7 1-10z" fill="url(#ms)" stroke="#7a7a80" stroke-width="1"/><path d="M10.5 15c4-2 12-3 16-2" fill="none" stroke="#b8b8c0" stroke-width="0.8"/><ellipse cx="16.8" cy="11" rx="1.4" ry="2.2" fill="#5050a0"/></svg>
<div class="lb" style="left:537.0px;top:311px">Myš</div>
<svg style="left:633px;top:272px;filter:drop-shadow(1px 1px 1px rgba(0,0,0,.28))" width="32" height="32" viewBox="0 0 32 32"><defs><linearGradient id="f25" x1="0" y1="0" x2="1" y2="1"><stop offset="0" stop-color="#fcf0b0"/><stop offset="1" stop-color="#e8c050"/></linearGradient><linearGradient id="f25b" x1="0" y1="0" x2="0" y2="1"><stop offset="0" stop-color="#fff4b8"/><stop offset="1" stop-color="#f0cc58"/></linearGradient><radialGradient id="ck2" cx="0.4" cy="0.35" r="0.7"><stop offset="0" stop-color="#fff"/><stop offset="1" stop-color="#b0d8f0"/></radialGradient></defs><path d="M2 10q0-2 2-2h6v24H2z" fill="url(#f25)" stroke="#b8943a" stroke-width="0.8"/><circle cx="20.3" cy="10.8" r="9" fill="#8a8a98"/><circle cx="20.3" cy="10.8" r="7.3" fill="url(#ck2)"/><path d="M17 14.5l4-4 .5-4" stroke="#1a2a5a" stroke-width="2" fill="none"/><path d="M8 19l24-5-6.5 16L4 32z" fill="url(#f25b)" stroke="#b8943a" stroke-width="0.8"/></svg>
<div class="lb" style="left:612.0px;top:311px">Naplánované<br>úlohy</div>
<svg style="left:708px;top:272px;filter:drop-shadow(1px 1px 1px rgba(0,0,0,.28))" width="32" height="32" viewBox="0 0 32 32"><defs><linearGradient id="f26" x1="0" y1="0" x2="1" y2="1"><stop offset="0" stop-color="#fcf0b0"/><stop offset="1" stop-color="#e8c050"/></linearGradient></defs><path d="M1.5 5q0-2 2-2h7l2 2h7.5q2 0 2 2V21H1.5z" fill="url(#f26)" stroke="#b8943a" stroke-width="0.8"/><path d="M22.5 11h9.5v20h-9.5z" fill="#9a9ae0" stroke="#5a5aa0" stroke-width="0.8"/><path d="M24 14h6M24 17h6M24 20h6" stroke="#c8c8f8" stroke-width="1"/><path d="M5 11l18 2" stroke="#a8a8a8" stroke-width="3"/><circle cx="7" cy="12" r="2.5" fill="#e8e8e8" stroke="#8a8a8a"/><rect x="10.5" y="16.5" width="3.5" height="14.5" rx="1" fill="#2a6ad8" stroke="#1a3a8a" stroke-width="0.6"/><rect x="17" y="18" width="4.5" height="12" rx="1" fill="#f05a1a" stroke="#8a2a0a" stroke-width="0.6"/></svg>
<div class="lb" style="left:687.0px;top:311px">Nástroje pro<br>správu</div>
<svg style="left:258px;top:347px;filter:drop-shadow(1px 1px 1px rgba(0,0,0,.28))" width="32" height="32" viewBox="0 0 32 32"><defs><radialGradient id="nbt" cx="0.4" cy="0.35" r="0.7"><stop offset="0" stop-color="#3ac0f0"/><stop offset="0.6" stop-color="#1a88c0"/><stop offset="1" stop-color="#0a5a90"/></radialGradient></defs><rect x="1.2" y="2.5" width="16" height="22.5" rx="7.5" fill="url(#nbt)"/><path d="M5.5 8.5l7 6-3.5 3.5V5l3.5 3.5-7 6" fill="none" stroke="#a8f0ff" stroke-width="1.3"/><path d="M12.4 13.3l7.3 9.6-6.4 9.6z" fill="#f8c0c0" stroke="#d02020" stroke-width="1"/><path d="M12.4 13.8l1.8 2.5v14l-1.8 1.8z" fill="#fff" stroke="#c08080" stroke-width="0.5"/><path d="M21 23.2h11" stroke="#e83030" stroke-width="1.5" stroke-dasharray="2.2 1"/><g stroke="#000" stroke-width="1.1" fill="none"><path d="M19 11.4h13M23 11.4c1-3 2-3 5-3.5M23 11.4c1 3 2 3 5 4"/></g><circle cx="19.5" cy="11.4" r="1.3"/><path d="M31 9.5l2 1.9-2 1.9z"/><circle cx="28.5" cy="7.8" r="1.1"/><rect x="27.5" y="14.5" width="2.2" height="2.2"/></svg>
<div class="lb" style="left:237.0px;top:386px">Nokia<br>Connecti<span class=el>...</span></div>
<svg style="left:333px;top:347px;filter:drop-shadow(1px 1px 1px rgba(0,0,0,.28))" width="32" height="32" viewBox="0 0 32 32"><defs><linearGradient id="f31" x1="0" y1="0" x2="1" y2="1"><stop offset="0" stop-color="#fcf0b0"/><stop offset="1" stop-color="#e8c050"/></linearGradient></defs><path d="M2.5 8q0-2 2-2h7l2 2h5.5q2 0 2 2V31H2.5z" fill="url(#f31)" stroke="#b8943a" stroke-width="0.8"/><path d="M19 13l9.6-10.5 1.4 22.9z" fill="#2ab02a" stroke="#1a7a1a" stroke-width="0.6"/><defs><linearGradient id="f31b" x1="0" y1="0" x2="0" y2="1"><stop offset="0" stop-color="#fff4b8"/><stop offset="1" stop-color="#f0cc58"/></linearGradient></defs><path d="M7.6 19l23.6-5.7-5 15.3-22.5 2.6z" fill="url(#f31b)" stroke="#b8943a" stroke-width="0.8"/><path d="M14 28l5-8 4 1-2 7" fill="none" stroke="#d8a820" stroke-width="2"/></svg>
<div class="lb" style="left:312.0px;top:386px">Písma</div>
<svg style="left:408px;top:347px;filter:drop-shadow(1px 1px 1px rgba(0,0,0,.28))" width="32" height="32" viewBox="0 0 32 32"><defs><linearGradient id="sp" x1="0" y1="0" x2="1" y2="1"><stop offset="0" stop-color="#b8f0ff"/><stop offset="1" stop-color="#2a88e8"/></linearGradient><radialGradient id="hd" cx="0.4" cy="0.4" r="0.6"><stop offset="0" stop-color="#ffc070"/><stop offset="1" stop-color="#e07020"/></radialGradient><linearGradient id="bd" x1="0" y1="0" x2="0" y2="1"><stop offset="0" stop-color="#5ad05a"/><stop offset="1" stop-color="#1a8a2a"/></linearGradient></defs><path d="M16 22l7-3 3.5 8-7 3.5z" fill="#8a7ad8" stroke="#5a4aa0" stroke-width="0.6"/><path d="M7 7L19.5 4l5 15.5-11 3.5z" fill="#a8a8d8" stroke="#6a6ab0" stroke-width="0.8"/><path d="M9 8.5l9.5-2.3 4 12.3-8.5 2.7z" fill="url(#sp)"/><ellipse cx="25.4" cy="8.2" rx="6.4" ry="5.4" fill="#f8d058" stroke="#b88a2a" stroke-width="0.8"/><path d="M21.5 12.5l-3 4.5 6-3z" fill="#f8d058" stroke="#b88a2a" stroke-width="0.6"/><path d="M22 6.5h7M21.5 9h7M23 11h4" stroke="#d8a030" stroke-width="0.8"/><path d="M1 32.5c0-5 3-8.5 7-8.5s8 3.5 8 8.5z" fill="url(#bd)" stroke="#1a5a1a" stroke-width="0.6"/><path d="M6.5 24.2l1.5 5 1.5-5z" fill="#fff"/><circle cx="7.8" cy="18.5" r="5.4" fill="url(#hd)" stroke="#9a5a1a" stroke-width="0.6"/><path d="M2.6 17.5c.5-4.5 3-6 5.2-6s5 1.5 5.4 6c-1.5-1.5-3-2-5.4-2s-3.8.5-5.2 2z" fill="#c8a060"/></svg>
<div class="lb" style="left:387.0px;top:386px">Program<br>Speech</div>
<svg style="left:483px;top:347px;filter:drop-shadow(1px 1px 1px rgba(0,0,0,.28))" width="32" height="32" viewBox="0 0 32 32"><path d="M4.5 15.5l8-1.5v14l-8-3z" fill="#c8dcf8"/><path d="M12.5 14L20 7l8.5 8.5V25l-16 3z" fill="#eaf2ff" stroke="#9ab0d0" stroke-width="0.6"/><path d="M2.8 11.7L12.7 3.1l8.9 5.1L12 16z" fill="#e0501a" stroke="#8a2a0a" stroke-width="0.6"/><path d="M12 16l9.6-7.8 8.3 7.4" fill="none" stroke="#b83a1a" stroke-width="1.5"/><rect x="19" y="1.8" width="3.5" height="5" fill="#c83a4a"/><rect x="21" y="17" width="3.2" height="7.8" fill="#1a5ad0"/><rect x="14" y="19" width="3.8" height="3.9" fill="#1a5ad0"/><rect x="7" y="30" width="20.4" height="2.5" rx="1" fill="#707070"/><path d="M17 25v5" stroke="#808080" stroke-width="1.2"/><circle cx="17" cy="31" r="1.8" fill="#f0e040"/></svg>
<div class="lb" style="left:462.0px;top:386px">Průvodce<br>instalací sítě</div>
<svg style="left:558px;top:347px;filter:drop-shadow(1px 1px 1px rgba(0,0,0,.28))" width="32" height="32" viewBox="0 0 32 32"><path d="M1.8 7l12.8-3.9 14 5-13.4 3.3z" fill="#2a9a2a" stroke="#1a5a1a" stroke-width="0.6"/><path d="M5 7l9-2.5 4 1.5-9 2.5z" fill="#5ac85a"/><path d="M29 7a2 2.5 0 1 1 0.1 0z" fill="#fff" stroke="#666"/><path d="M1.2 13l14-3.5 13.4 3.5v6L15 22 1.2 19z" fill="#a8a8f0" stroke="#4a4a8a" stroke-width="0.8"/><path d="M1.2 13l13.8 3.5 13.6-3.5" fill="none" stroke="#d8d8ff" stroke-width="0.8"/><path d="M16 19l5-1" stroke="#c83a3a" stroke-width="1.5"/><path d="M10 22c-8 1-8 5 0 5h8" fill="none" stroke="#a0a0a0" stroke-width="2"/><path d="M17 25l13 3-2 4-11-2z" fill="#c8902a" stroke="#5a4a2a" stroke-width="0.8"/><path d="M18 26l11 2.5" stroke="#f0e0a0" stroke-width="1"/></svg>
<div class="lb" style="left:537.0px;top:386px">Přidat<br>hardware</div>
<svg style="left:633px;top:347px;filter:drop-shadow(1px 1px 1px rgba(0,0,0,.28))" width="32" height="32" viewBox="0 0 32 32"><defs><linearGradient id="cd" x1="0" y1="0" x2="1" y2="1"><stop offset="0" stop-color="#f0f0ff"/><stop offset="0.5" stop-color="#c8b8f0"/><stop offset="1" stop-color="#e0e0ff"/></linearGradient></defs><path d="M1.5 5l3-2.5h15l2 2.5v27H3.5L1.5 30z" fill="#eaeaf4" stroke="#a0a0b8" stroke-width="0.8"/><path d="M4 4h15l2 6H6z" fill="#a8a8e8"/><path d="M20 4l5-1-1 6h-3z" fill="#e0e0f0"/><path d="M7 11l14-1v20L7 30z" fill="#3a8ae8"/><rect x="10" y="20" width="3" height="9" fill="#2ab02a"/><rect x="10" y="19" width="3" height="2" fill="#f09a3a"/><circle cx="22.3" cy="21.6" r="9" fill="url(#cd)" stroke="#8a8ab0" stroke-width="0.8"/><circle cx="22.3" cy="21.6" r="2.2" fill="#fff" stroke="#6a6a90"/></svg>
<div class="lb" style="left:612.0px;top:386px">Přidat nebo<br>odebrat <span class=el>...</span></div>
<svg style="left:708px;top:347px;filter:drop-shadow(1px 1px 1px rgba(0,0,0,.28))" width="32" height="32" viewBox="0 0 32 32"><defs><radialGradient id="gsel" cx="0.4" cy="0.35" r="0.75"><stop offset="0" stop-color="#8ac0f0"/><stop offset="0.5" stop-color="#3070d0"/><stop offset="1" stop-color="#1a3aa8"/></radialGradient></defs><circle cx="15.2" cy="14.6" r="11.6" fill="url(#gsel)"/><path transform="translate(15.2,14.6)" d="M-8 -6c3-4 8-5 11-3 2 2-1 4-3 5-2 2 0 5-2 7-3 2-6 0-7-3-1-2 0-4 1-6z M3 -10c4 0 7 3 8 6 0 3-2 5-4 6-2 0-2-3-3-5-1-2-3-3-2-5z" fill="#3a8a8a" opacity="0.7"/><path d="M19 19c5-1 9 2 8 5-1 2-5 2-5 4-1 2 2 3 4 3" fill="none" stroke="#7a9ad8" stroke-width="3"/></svg>
<div class="a" style="left:703px;top:385px;width:45px;height:28px;background:#316ac5"></div>
<div class="lb" style="left:687.0px;top:386px;color:#fff;-webkit-text-stroke:0.2px #fff">Síťová<br>připojení</div>
<svg style="left:258px;top:422px;filter:drop-shadow(1px 1px 1px rgba(0,0,0,.28))" width="32" height="32" viewBox="0 0 32 32"><defs><linearGradient id="f40" x1="0" y1="0" x2="1" y2="1"><stop offset="0" stop-color="#fcf0b0"/><stop offset="1" stop-color="#e8c050"/></linearGradient></defs><path d="M1.2 5q0-2 2-2h7l2 2h1.8000000000000007q2 0 2 2V21H1.2z" fill="url(#f40)" stroke="#b8943a" stroke-width="0.8"/><defs><linearGradient id="cam" x1="0" y1="0" x2="0" y2="1"><stop offset="0" stop-color="#f8f8fc"/><stop offset="1" stop-color="#a8a8b8"/></linearGradient><linearGradient id="sc" x1="0" y1="0" x2="1" y2="0"><stop offset="0" stop-color="#e8f0ff"/><stop offset="0.5" stop-color="#6a9ae8"/><stop offset="1" stop-color="#c8d8f8"/></linearGradient></defs><rect x="15.2" y="5" width="17" height="11.5" rx="1.5" fill="url(#cam)" stroke="#5a5a6a" stroke-width="0.8"/><rect x="17" y="3.5" width="5" height="2" fill="#c8c8d0" stroke="#6a6a7a" stroke-width="0.5"/><circle cx="26.7" cy="11" r="4.3" fill="#c8c8d0" stroke="#4a4a5a" stroke-width="0.8"/><circle cx="26.7" cy="11" r="2.6" fill="#2a3a5a"/><circle cx="26" cy="10.3" r="0.8" fill="#8ab0e0"/><path d="M7 14.5l24.5 4.2-.8 2.2L7 17.2z" fill="#f0f0f8" stroke="#5a5a6a" stroke-width="0.7"/><path d="M3 25l11-6.5 18 4.5-10 8.5z" fill="#e0e0e8" stroke="#5a5a70" stroke-width="0.8"/><path d="M7 24.5l8-4.5 13 3.2-7 5.5z" fill="url(#sc)"/><path d="M3 25l19 6v1.2L3 26.5z" fill="#b8b8c8"/></svg>
<div class="lb" style="left:237.0px;top:461px">Skenery a<br>fotoaparáty</div>
<svg style="left:333px;top:422px;filter:drop-shadow(1px 1px 1px rgba(0,0,0,.28))" width="32" height="32" viewBox="0 0 32 32"><defs><linearGradient id="sy" x1="0" y1="0" x2="1" y2="1"><stop offset="0" stop-color="#c0ecff"/><stop offset="1" stop-color="#3a9aee"/></linearGradient></defs><path d="M17 3.1l15.8 3v19l-15.8-1z" fill="#d8d8f0" stroke="#8a8ab0" stroke-width="0.8"/><path d="M26 9h5M26 12h5M26 15h5" stroke="#9a9ac8"/><ellipse cx="11.7" cy="26.7" rx="9.5" ry="4.5" fill="#ececf4" stroke="#9a9ab0" stroke-width="0.8"/><path d="M10 20h5v7h-5z" fill="#b0b0e0"/><path d="M1.2 5l18.5-1.9-.7 17.2-15.9 1.9z" fill="#c8c8dc" stroke="#8a8aa8" stroke-width="0.8"/><path d="M3 7l15-1.5-.5 13.5L4.5 20z" fill="url(#sy)"/><path d="M8 16l4 4.5 5-11" stroke="#7a1a2a" stroke-width="2" fill="none"/></svg>
<div class="lb" style="left:312.0px;top:461px">Systém</div>
<svg style="left:408px;top:422px;filter:drop-shadow(1px 1px 1px rgba(0,0,0,.28))" width="32" height="32" viewBox="0 0 32 32"><defs><linearGradient id="f42" x1="0" y1="0" x2="1" y2="1"><stop offset="0" stop-color="#fcf0b0"/><stop offset="1" stop-color="#e8c050"/></linearGradient></defs><path d="M1.2 5q0-2 2-2h7l2 2h-3.1999999999999993q2 0 2 2V21H1.2z" fill="url(#f42)" stroke="#b8943a" stroke-width="0.8"/><path d="M10 4.5l10-.8 3.5 5 -.5 8H11z" fill="#d8ecff" stroke="#8aa8c8" stroke-width="0.6"/><path d="M13 8h7M13 10.5h7M13 13h6" stroke="#a8c8e8" stroke-width="0.7"/><defs><linearGradient id="pr" x1="0" y1="0" x2="0" y2="1"><stop offset="0" stop-color="#ffffff"/><stop offset="1" stop-color="#a8a8b4"/></linearGradient></defs><path d="M6.5 18.5l5.5-4.5h15l4.5 4.5z" fill="#f4f4f4" stroke="#6a6a70" stroke-width="0.8"/><rect x="6.5" y="18.5" width="25" height="8.5" fill="url(#pr)" stroke="#5a5a60" stroke-width="0.8"/><rect x="12" y="22.5" width="14" height="1.8" fill="#4a4a52"/><path d="M12 27h14l2 4H10z" fill="#d8d8dc" stroke="#6a6a70" stroke-width="0.7"/></svg>
<div class="lb" style="left:387.0px;top:461px">Tiskárny a<br>faxy</div>
<svg style="left:483px;top:422px;filter:drop-shadow(1px 1px 1px rgba(0,0,0,.28))" width="32" height="32" viewBox="0 0 32 32"><path d="M16 32c0-7 3-13 8-13s8 6 8 13z" fill="#3aa83a" stroke="#1a6a1a" stroke-width="0.6"/><path d="M22 20l2 6 2-6z" fill="#fff"/><circle cx="23.5" cy="12.5" r="6.5" fill="#f0a040" stroke="#a8702a" stroke-width="0.6"/><path d="M17 11c0-5 4-7 6.5-7s6.5 2 6.5 7c-2-2-4-2-6.5-2s-4.5 0-6.5 2z" fill="#e0b050"/><path d="M1.8 29c0-7 4-10 7.5-10s7.5 3 7.5 10z" fill="#3a5ae0" stroke="#1a2a8a" stroke-width="0.6"/><path d="M7 19l2 6 2-6z" fill="#a8d8ff"/><circle cx="9" cy="13.3" r="7" fill="#2a2a2a"/><circle cx="10.5" cy="15" r="5.2" fill="#e86a20"/></svg>
<div class="lb" style="left:462.0px;top:461px">Uživatelské<br>účty</div>
<svg style="left:558px;top:422px;filter:drop-shadow(1px 1px 1px rgba(0,0,0,.28))" width="32" height="32" viewBox="0 0 32 32"><rect x="3" y="24.8" width="11" height="7" fill="#000"/><rect x="7" y="25.4" width="1.5" height="2.6" fill="#3ae03a"/><rect x="10" y="25.4" width="1.5" height="2.6" fill="#3ae03a"/><g fill="none" stroke="#e8e030" stroke-width="2.2"><path d="M10.5 19.3A7 7 0 0 1 17.5 26"/><path d="M11.4 12.7A13 13 0 0 1 25.5 24"/><path d="M11.4 5A20.5 20.5 0 0 1 31.2 24"/></g></svg>
<div class="lb" style="left:537.0px;top:461px">Wireless<br>Network</div>
<svg style="left:633px;top:422px;filter:drop-shadow(1px 1px 1px rgba(0,0,0,.28))" width="32" height="32" viewBox="0 0 32 32"><ellipse cx="17.1" cy="16.8" rx="9.6" ry="13.7" fill="#1a58d8"/><path d="M11.4 11.4l10.9 10.2-5.8 5.6V5.2l5.8 5.6-10.9 10.2" fill="none" stroke="#fff" stroke-width="2"/></svg>
<div class="lb" style="left:612.0px;top:461px">Zařízení<br>Bluetooth</div>
<svg style="left:708px;top:422px;filter:drop-shadow(1px 1px 1px rgba(0,0,0,.28))" width="32" height="32" viewBox="0 0 32 32"><ellipse cx="11" cy="27" rx="9.6" ry="4.3" fill="#ececf4" stroke="#9a9ab0" stroke-width="0.8"/><path d="M9 20h5v7H9z" fill="#b0b0e0"/><defs><linearGradient id="zo" x1="0" y1="0" x2="1" y2="1"><stop offset="0" stop-color="#b0e4ff"/><stop offset="1" stop-color="#2a88e8"/></linearGradient></defs><path d="M1.5 5.7L19 3.1l.7 14.7L5 22.9z" fill="#c8c8dc" stroke="#8a8aa8" stroke-width="0.8"/><path d="M3.3 7.3L17.5 5l.5 11.5L6 20.5z" fill="url(#zo)"/><path d="M17 15.2l15.5 9.6" stroke="#1a6a1a" stroke-width="3.6" stroke-linecap="round"/><path d="M17 15.2l15 9.2" stroke="#4ac83a" stroke-width="2" stroke-linecap="round"/><path d="M9 10l6-2 2 5-6 2z" fill="#d8a830" stroke="#8a6a1a" stroke-width="0.6"/></svg>
<div class="lb" style="left:687.0px;top:461px">Zobrazení</div>
<svg style="left:258px;top:497px;filter:drop-shadow(1px 1px 1px rgba(0,0,0,.28))" width="32" height="32" viewBox="0 0 32 32"><defs><radialGradient id="spk" cx="0.35" cy="0.35" r="0.7"><stop offset="0" stop-color="#ffffff"/><stop offset="0.6" stop-color="#c8c8cc"/><stop offset="1" stop-color="#707078"/></radialGradient><radialGradient id="spd" cx="0.4" cy="0.35" r="0.7"><stop offset="0" stop-color="#f0f0f0"/><stop offset="1" stop-color="#70707a"/></radialGradient></defs><g fill="none" stroke="#a0a0e8" stroke-width="1.6"><path d="M27 18c1.5 4-.5 9-5 11.5"/><path d="M30 16.5c2 6-1 12.5-7.5 15"/><path d="M24.5 20c1 2.5 0 5.5-3 7.5"/></g><ellipse cx="5.8" cy="10.5" rx="3.6" ry="5.4" fill="url(#spd)" stroke="#3a3a5a" stroke-width="0.9"/><ellipse cx="16.6" cy="14.3" rx="9.6" ry="11.6" transform="rotate(-28 16.6 14.3)" fill="url(#spk)" stroke="#202028" stroke-width="1.3"/><ellipse cx="14.3" cy="13.3" rx="4.6" ry="5" transform="rotate(-28 14.3 13.3)" fill="url(#spd)" stroke="#3a3a60" stroke-width="1"/></svg>
<div class="lb" style="left:237.0px;top:536px">Zvuky a<br>zvuko<span class=el>...</span></div>
</body></html>
